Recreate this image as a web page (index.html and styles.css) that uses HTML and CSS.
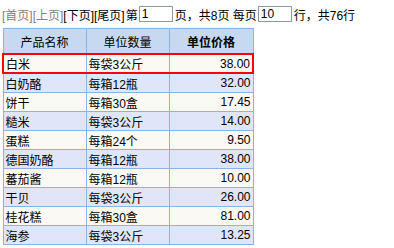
FILE: index.html
```
<!DOCTYPE html>
<html lang="zh">
<head>
<meta charset="utf-8">
<link rel="stylesheet" href="styles.css">
</head>
<body>
<div class="pager">
  <span class="link disabled">[首页]</span><span class="link disabled">[上页]</span><span class="link">[下页]</span><span class="link">[尾页]</span>
  <span class="label">第</span><input class="box page" type="text" value="1"><span class="label">页，共8页&nbsp;每页</span><input class="box size" type="text" value="10"><span class="label">行，共76行</span>
</div>
<table class="grid">
  <colgroup><col class="c1"><col class="c2"><col class="c3"></colgroup>
  <thead>
    <tr><th>产品名称</th><th>单位数量</th><th class="strong">单位价格</th></tr>
  </thead>
  <tbody>
    <tr class="odd selected"><td>白米</td><td>每袋3公斤</td><td class="num">38.00</td></tr>
    <tr class="even"><td>白奶酪</td><td>每箱12瓶</td><td class="num">32.00</td></tr>
    <tr class="odd"><td>饼干</td><td>每箱30盒</td><td class="num">17.45</td></tr>
    <tr class="even"><td>糙米</td><td>每袋3公斤</td><td class="num">14.00</td></tr>
    <tr class="odd"><td>蛋糕</td><td>每箱24个</td><td class="num">9.50</td></tr>
    <tr class="even"><td>德国奶酪</td><td>每箱12瓶</td><td class="num">38.00</td></tr>
    <tr class="odd"><td>蕃茄酱</td><td>每箱12瓶</td><td class="num">10.00</td></tr>
    <tr class="even"><td>干贝</td><td>每袋3公斤</td><td class="num">26.00</td></tr>
    <tr class="odd"><td>桂花糕</td><td>每箱30盒</td><td class="num">81.00</td></tr>
    <tr class="even"><td>海参</td><td>每袋3公斤</td><td class="num">13.25</td></tr>
  </tbody>
</table>
</body>
</html>
```
FILE: styles.css
```
html, body {
  margin: 0;
  padding: 0;
  background: #ffffff;
}
body {
  padding: 0 2px;
  font-family: "Liberation Sans", "Noto Sans CJK SC", sans-serif;
  font-size: 12px;
  color: #000000;
}
.pager {
  display: flex;
  align-items: center;
  height: 16px;
  margin-top: 6px;
  white-space: nowrap;
}
.link.disabled {
  color: #808080;
}
.label {
  margin-left: 1px;
}
.pager .label:first-of-type {
  margin-left: 3px;
}
.box {
  box-sizing: border-box;
  height: 16px;
  border: 1px solid #8e9a9a;
  padding: 0 2px;
  margin: 0 1px;
  font-family: "Liberation Sans", sans-serif;
  font-size: 12px;
  color: #000;
  background: #fff;
  outline: none;
}
.box.page { width: 34px; }
.box.size { width: 34px; }
.grid {
  border-collapse: collapse;
  margin-top: 6px;
  table-layout: fixed;
  width: 251px;
}
.c1 { width: 83px; }
.c2 { width: 83px; }
.c3 { width: 84px; }
.grid th, .grid td {
  border: 1px solid #8db3e2;
  padding: 0 2px;
  white-space: nowrap;
  overflow: hidden;
}
.grid th {
  height: 24px;
  background: #c6d9f0;
  font-weight: normal;
  text-align: center;
}
.grid th.strong {
  font-weight: bold;
}
.grid td {
  height: 18px;
  text-align: left;
}
.grid td.num {
  text-align: right;
}
.odd td { background: #fbf9f4; }
.even td { background: #e0e6fa; }
.selected td {
  border-top: 2px solid #ff0000;
  border-bottom: 2px solid #ff0000;
  height: 15px;
}
.selected td:first-child { border-left: 2px solid #ff0000; }
.selected td:last-child { border-right: 2px solid #ff0000; }
```
